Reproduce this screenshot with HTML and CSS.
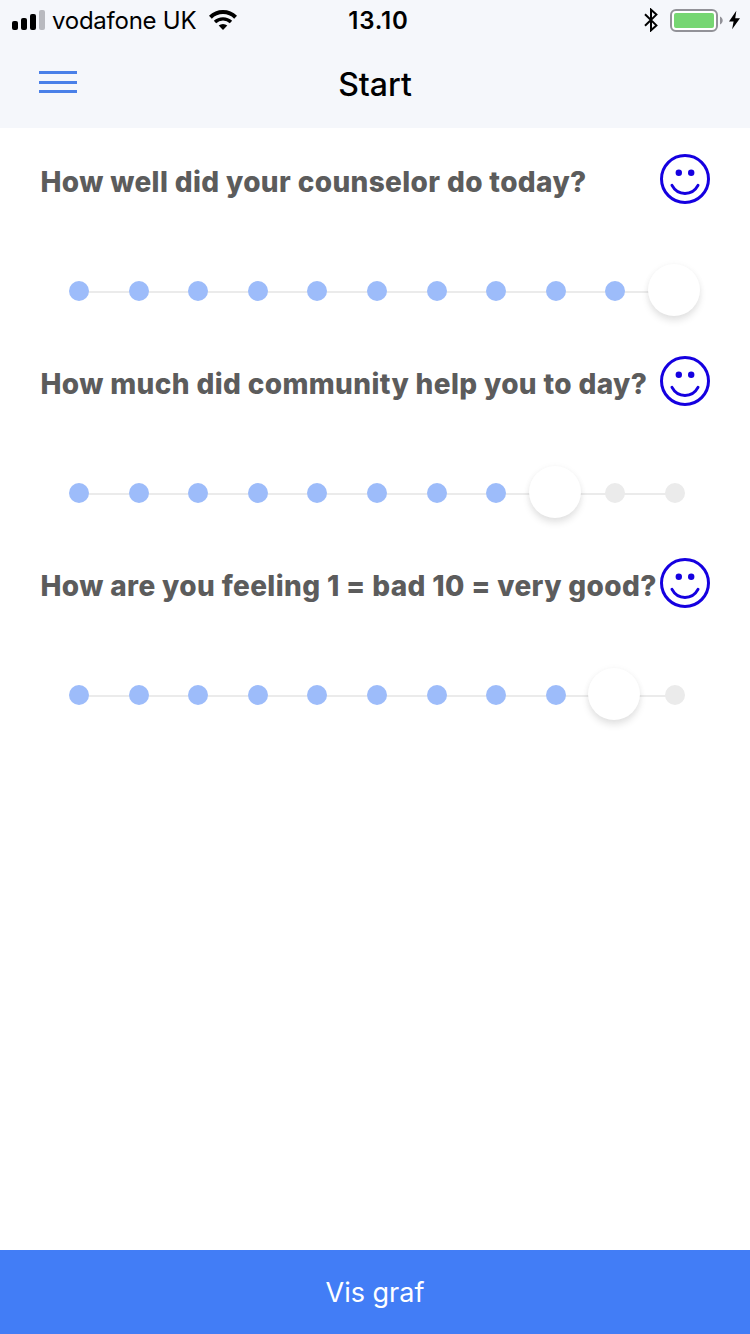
FILE: index.html
```html
<!DOCTYPE html>
<html lang="en">
<head>
    <meta charset="UTF-8">
    <meta name="viewport" content="width=device-width, initial-scale=1.0">
    <title>Start</title>
    <link rel="stylesheet" href="styles.css">
</head>
<body>
    <header class="header">
        <div class="status-bar">
            <div class="status-left">
                <svg class="signal" width="33" height="20" viewBox="0 0 33 20">
                    <rect x="0" y="11" width="6" height="9" rx="2"/>
                    <rect x="9" y="8" width="6" height="12" rx="2"/>
                    <rect x="18" y="4" width="6" height="16" rx="2"/>
                    <rect x="27" y="0" width="6" height="20" rx="2" fill="#b9babf"/>
                </svg>
                <span class="carrier">vodafone UK</span>
                <svg class="wifi" width="28" height="20" viewBox="0 0 28 20">
                    <path d="M1.4 7.2a18 18 0 0 1 25.2 0" fill="none" stroke="#000" stroke-width="4"/>
                    <path d="M6 12.1a11.6 11.6 0 0 1 16 0" fill="none" stroke="#000" stroke-width="3.4"/>
                    <path d="M14 20l-4.3-4.4a6.4 6.4 0 0 1 8.6 0z"/>
                </svg>
            </div>
            <span class="time">13.10</span>
            <div class="status-right">
                <svg width="14" height="24" viewBox="0 0 14 24">
                    <path d="M1 6.2L12.4 17.4 7 22.3V1.7l5.4 4.9L1 17.8" fill="none" stroke="#000" stroke-width="2"/>
                </svg>
                <svg class="battery" width="54" height="24" viewBox="0 0 54 24">
                    <rect x="1" y="1" width="46" height="21" rx="5" fill="#fff" stroke="#929298" stroke-width="2"/>
                    <rect x="4" y="4" width="40" height="15" rx="2" fill="#76d672"/>
                    <path d="M50 7.5c3.6 1.6 3.6 6.4 0 8z" fill="#929298"/>
                </svg>
                <svg class="bolt" width="11" height="20" viewBox="0 0 12 20">
                    <path d="M8 0L0 11.5h5L3.4 20 12 8H6.8z"/>
                </svg>
            </div>
        </div>
        <div class="nav-bar">
            <button class="menu" aria-label="Menu">
                <span></span>
                <span></span>
                <span></span>
            </button>
            <h1 class="title">Start</h1>
        </div>
    </header>

    <main class="questions">
        <section class="question">
            <div class="question-head">
                <h2>How well did your counselor do today?</h2>
                <svg class="smiley" width="50" height="50" viewBox="0 0 50 50">
                    <circle class="line" cx="25" cy="25" r="23.5"/>
                    <circle cx="18.8" cy="18.8" r="3.2"/>
                    <circle cx="31.2" cy="18.8" r="3.2"/>
                    <path class="line" d="M12 31.4c5.8 10.8 20.2 10.8 26 0"/>
                </svg>
            </div>
            <div class="slider">
                <i class="on"></i><i class="on"></i><i class="on"></i><i class="on"></i><i class="on"></i><i class="on"></i><i class="on"></i><i class="on"></i><i class="on"></i><i class="on"></i><i class="thumb"></i>
            </div>
        </section>

        <section class="question">
            <div class="question-head">
                <h2>How much did community help you to day?</h2>
                <svg class="smiley" width="50" height="50" viewBox="0 0 50 50">
                    <circle class="line" cx="25" cy="25" r="23.5"/>
                    <circle cx="18.8" cy="18.8" r="3.2"/>
                    <circle cx="31.2" cy="18.8" r="3.2"/>
                    <path class="line" d="M12 31.4c5.8 10.8 20.2 10.8 26 0"/>
                </svg>
            </div>
            <div class="slider">
                <i class="on"></i><i class="on"></i><i class="on"></i><i class="on"></i><i class="on"></i><i class="on"></i><i class="on"></i><i class="on"></i><i class="thumb"></i><i></i><i></i>
            </div>
        </section>

        <section class="question">
            <div class="question-head">
                <h2>How are you feeling 1 = bad 10 = very good?</h2>
                <svg class="smiley" width="50" height="50" viewBox="0 0 50 50">
                    <circle class="line" cx="25" cy="25" r="23.5"/>
                    <circle cx="18.8" cy="18.8" r="3.2"/>
                    <circle cx="31.2" cy="18.8" r="3.2"/>
                    <path class="line" d="M12 31.4c5.8 10.8 20.2 10.8 26 0"/>
                </svg>
            </div>
            <div class="slider">
                <i class="on"></i><i class="on"></i><i class="on"></i><i class="on"></i><i class="on"></i><i class="on"></i><i class="on"></i><i class="on"></i><i class="on"></i><i class="thumb"></i><i></i>
            </div>
        </section>
    </main>

    <button class="show-graph">Vis graf</button>
</body>
</html>
```
FILE: styles.css
```css
* {
    box-sizing: border-box;
}

body {
    display: flex;
    flex-direction: column;
    height: 1334px;
    margin: 0;
    font-family: Inter, "Liberation Sans", sans-serif;
    background-color: #fff;
}

svg {
    display: block;
    flex: none;
}

/* header */
.header {
    height: 128px;
    background-color: #f5f7fb;
}

.status-bar {
    display: grid;
    grid-template-columns: 1fr auto 1fr;
    align-items: center;
    height: 40px;
    padding: 0 10px 0 12px;
}

.status-left, .status-right {
    display: flex;
    align-items: center;
}

.status-right {
    justify-content: flex-end;
}

.carrier {
    margin-left: 7px;
    font-size: 24px;
    letter-spacing: -0.25px;
    white-space: nowrap;
}

.wifi {
    margin-left: 13px;
}

.time {
    padding-left: 5px;
    font-size: 24px;
    font-weight: 600;
    letter-spacing: 0.8px;
}

.battery {
    margin: 1px 5px 0 12px;
}

.nav-bar {
    display: grid;
    grid-template-columns: 1fr auto 1fr;
    align-items: center;
    height: 88px;
    padding: 0 39px;
}

.menu {
    display: flex;
    flex-direction: column;
    gap: 6.5px;
    width: 38px;
    margin-top: -4px;
    padding: 0;
    border: none;
    background: none;
}

.menu span {
    height: 3px;
    background-color: #4a80e8;
}

.title {
    margin: 0;
    font-size: 32px;
    font-weight: 500;
}

/* questions */
.questions {
    flex: 1;
    padding: 26px 40px 0;
}

.question {
    height: 202px;
}

.question-head {
    display: flex;
    justify-content: space-between;
    height: 50px;
}

.question h2 {
    margin: 0 0 0 0.5px;
    font-size: 28px;
    font-weight: 800;
    line-height: 57px;
    letter-spacing: 0.37px;
    color: #5c5c5c;
    white-space: nowrap;
}

.smiley {
    fill: #1500e0;
}

.smiley .line {
    fill: none;
    stroke: #1500e0;
    stroke-width: 3;
    stroke-linecap: round;
}

.slider {
    display: flex;
    justify-content: space-between;
    margin: 77px 25px 0 29px;
    background: linear-gradient(#ebebeb, #ebebeb) center 10px / calc(100% - 20px) 2px no-repeat;
}

.slider i {
    width: 20px;
    height: 20px;
    border-radius: 50%;
    background-color: #ebebeb;
}

.slider .on {
    background-color: #9dbcfa;
}

.slider .thumb {
    position: relative;
}

/* the knob covers its own stop */
.slider .thumb::after {
    content: "";
    position: absolute;
    top: -17px;
    left: -17px;
    width: 52px;
    height: 52px;
    border-radius: 50%;
    background-color: #fff;
    box-shadow: 0 5px 7px rgba(0, 0, 0, 0.1), 0 0 6px rgba(0, 0, 0, 0.04);
}

/* footer */
.show-graph {
    height: 84px;
    border: none;
    font-family: inherit;
    font-size: 27px;
    color: #fff;
    background-color: #427df6;
}
```
